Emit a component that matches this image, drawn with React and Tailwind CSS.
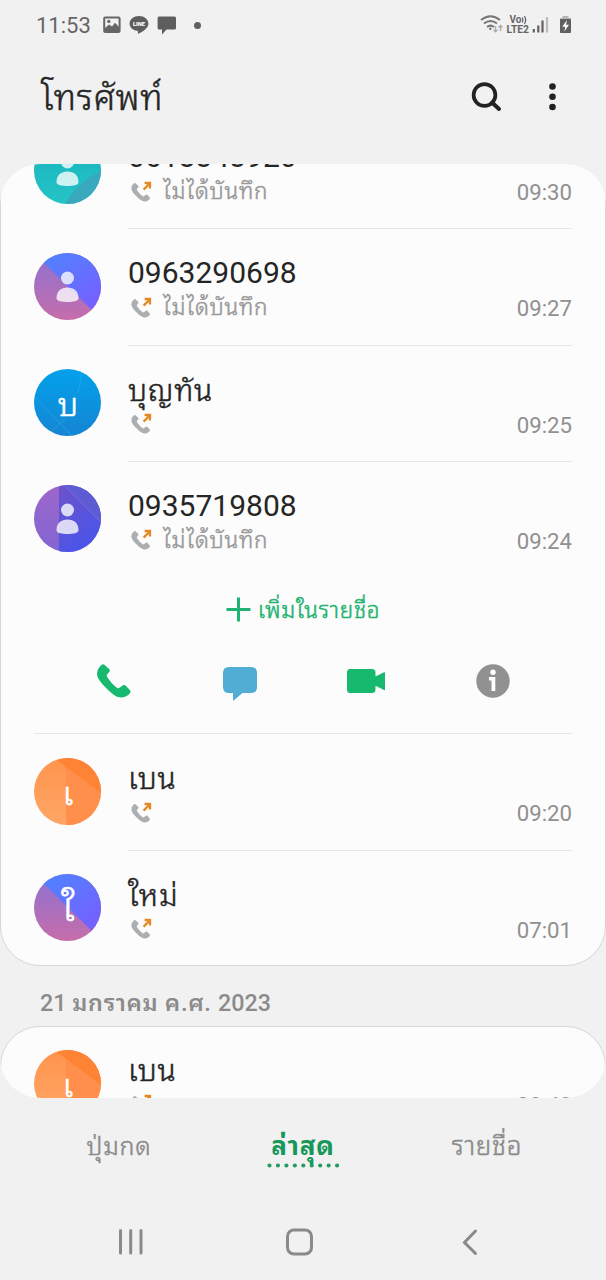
import React from "react";

const PHONE =
  "M14 2Q18 -1 22 2L36 15Q40 19 37 23L29 32Q28 36 33 43Q46 62 60 71Q64 74 68 70L77 63Q81 61 85 64L98 78Q102 84 96 89Q84 101 68 99Q52 97 30 74Q2 48 0 32Q0 12 14 2Z";

const PERSON = (
  <g fill="#fff" fillOpacity="0.78">
    <circle cx="33.5" cy="25" r="6.5" />
    <path d="M22.500 45.500C22.500 38 27 34.500 33.500 34.500S44.500 38 44.500 45.500C44.500 50.200 22.500 50.200 22.500 45.500Z" />
  </g>
);

const GRADIENTS = {
  teal: ["#1ab5c0", "#25c3c6", "#2f9fb9", "#3aa9be"],
  violet: ["#9272cf", "#c66daa", "#5083ff", "#7560ff"],
  blue: ["#049ee9", "#1585d2", "#049ee9", "#1585d2"],
  purple: ["#9a66cc", "#8365d2", "#7052c4", "#4c55e8"],
  orange: ["#ff9650", "#ffa665", "#ff8433", "#ff8740"],
};

function Avatar({ kind, id, letter }) {
  const clip = `clip-${id}`;
  const g1 = `g1-${id}`;
  const g2 = `g2-${id}`;
  const stops = GRADIENTS[kind];
  return (
    <svg className="block h-[67px] w-[67px] shrink-0" viewBox="0 0 67 67">
      <defs>
        <clipPath id={clip}>
          <circle cx="33.5" cy="33.5" r="33.5" />
        </clipPath>
        <linearGradient id={g1} x1="0" y1="0" x2="0" y2="67" gradientUnits="userSpaceOnUse">
          <stop offset="0.1" stopColor={stops[0]} />
          <stop offset="1" stopColor={stops[1]} />
        </linearGradient>
        <linearGradient id={g2} x1="15" y1="0" x2="55" y2="55" gradientUnits="userSpaceOnUse">
          <stop offset="0" stopColor={stops[2]} />
          <stop offset="1" stopColor={stops[3]} />
        </linearGradient>
      </defs>
      <g clipPath={`url(#${clip})`}>
        <rect width="67" height="67" fill={`url(#${g1})`} />
        {kind === "teal" && <path d="M67 34Q42 46 31 67H67Z" fill={`url(#${g2})`} />}
        {kind === "violet" && <path d="M0 0L67 66V0Z" fill={`url(#${g2})`} />}
        {kind === "blue" && (
          <g fill="none" stroke="#3db4ee" strokeOpacity="0.55" strokeWidth="0.8">
            <path d="M48 3L44 24" />
            <path d="M2 29L38 67" />
            <path d="M18 61L32 49" />
          </g>
        )}
        {kind === "purple" && (
          <>
            <rect x="25" width="42" height="67" fill={`url(#${g2})`} />
            <path d="M30 0L67 37V0Z" fill="#5e5cd2" />
            <path d="M30 0L67 37" stroke="#8280df" strokeWidth="0.6" />
          </>
        )}
        {kind === "orange" && (
          <>
            <rect x="32" width="35" height="67" fill="#ff8f4b" />
            <path d="M20 0L67 35V0Z" fill="#ff8335" />
          </>
        )}
        {letter ? (
          <text
            x="34"
            y="47"
            textAnchor="middle"
            fill="#fff"
            stroke="#fff"
            strokeWidth="0.7"
            fontSize={letter === "ใ" ? 38 : 32}
            fontWeight="300"
            fontFamily='"Noto Sans Thai Looped", Loma, sans-serif'
          >
            {letter}
          </text>
        ) : (
          PERSON
        )}
      </g>
    </svg>
  );
}

function OutgoingCall() {
  return (
    <svg className="block h-[22px] w-[22px] shrink-0" viewBox="0 0 22 22">
      <g transform="translate(0.400 1.900) scale(0.187)">
        <path d={PHONE} fill="#acaeb0" />
      </g>
      <path d="M12.600 8.600L18 3.200M13.600 2H19V7.500" fill="none" stroke="#e58a22" strokeWidth="2.300" />
    </svg>
  );
}

function Thai({ children }) {
  return (
    <span className="relative -top-[2px] font-['Noto_Sans_Thai_Looped',Loma,sans-serif] font-light tracking-[0.75px] [-webkit-text-stroke:0.5px]">
      {children}
    </span>
  );
}

function Row({ id, kind, letter, number, name, note, time, divider }) {
  return (
    <div className="flex h-[116.33px] shrink-0 pl-[34px] pr-[34px]">
      <div className="pt-[23.5px]">
        <Avatar id={id} kind={kind} letter={letter} />
      </div>
      <div className={divider ? "ml-[27px] flex-1 border-b border-[#e6e6e6] pt-[26px]" : "ml-[27px] flex-1 pt-[26px]"}>
        <div className="h-[36px] whitespace-nowrap text-[30px] leading-[35px] text-[#252525]">
          {number || <Thai>{name}</Thai>}
        </div>
        <div className="flex h-[33px] items-center pl-[3px]">
          <OutgoingCall />
          <span className="ml-[10px] flex-1 whitespace-nowrap pt-[2px] text-[22.500px] leading-[33px] text-[#999]">
            {note && <Thai>{note}</Thai>}
          </span>
          <span className="whitespace-nowrap pt-[2px] text-[22.200px] leading-[33px] text-[#909090]">{time}</span>
        </div>
      </div>
    </div>
  );
}

function StatusBar() {
  return (
    <div className="flex h-[50px] items-center pl-[36px] pr-[33px] text-[#666]">
      <span className="pt-[2px] text-[22px] leading-[48px]">11:53</span>
      <svg className="ml-[12px] h-[18px] w-[18px]" viewBox="0 0 18 18">
        <rect x="1.200" y="1.500" width="15.400" height="14.500" rx="1" fill="none" stroke="#666" strokeWidth="2" />
        <path d="M2 12L6 8.500L9 10.500L12 6.800L16 11V16H2Z" fill="#666" />
        <circle cx="5.800" cy="5.400" r="1.700" fill="#666" />
      </svg>
      <svg className="ml-[8px] h-[20px] w-[20px]" viewBox="0 0 20 20">
        <path d="M10 1C4.800 1 0.600 4.300 0.600 8.700C0.600 12.500 3.800 15 8 15.800C9.300 16.100 9 17.200 8.900 19C12 17.500 19.400 13.500 19.400 8.700C19.400 4.300 15.200 1 10 1Z" fill="#5e5e5e" />
        <text x="10" y="10.800" textAnchor="middle" fontSize="5.800" fontWeight="900" fill="#fff" fontFamily="Roboto, sans-serif">LINE</text>
      </svg>
      <svg className="ml-[8px] h-[19px] w-[20px]" viewBox="0 0 20 19">
        <path d="M2 0.500H17.500Q19 0.500 19 2V12Q19 13.500 17.500 13.500H9.500L5 18.500V13.500H2Q0.600 13.500 0.600 12V2Q0.600 0.500 2 0.500Z" fill="#5e5e5e" />
      </svg>
      <span className="ml-[17px] h-[7px] w-[7px] rounded-full bg-[#606060]" />
      <div className="flex-1" />
      <svg className="h-[24px] w-[93px]" viewBox="480 13 93 24">
        <g fill="none" stroke="#777" strokeWidth="2" strokeLinecap="butt">
          <path d="M481 20Q490.500 12.500 500 20" />
          <path d="M484 23.500Q490.500 18.500 497 23.500" />
          <path d="M487 27Q490.500 24.200 494 27" />
        </g>
        <circle cx="490.300" cy="28.800" r="1.300" fill="#777" />
        <g fill="none" stroke="#adadad" strokeWidth="1.400">
          <path d="M495.500 26V31.800M493.500 29.700L495.500 31.700L497.500 29.700M500.500 31V25.500M498.500 27.600L500.500 25.600L502.500 27.600" />
        </g>
        <g fill="#666" fontFamily="Roboto, sans-serif" fontWeight="700">
          <text x="509.500" y="23.400" fontSize="10">Vo</text>
          <text x="506.500" y="33" fontSize="10.500" textLength="22.500" lengthAdjust="spacingAndGlyphs">LTE2</text>
        </g>
        <path d="M522.300 17.500Q523.600 20 522.300 22.500M524.400 16Q526.900 20 524.400 24" fill="none" stroke="#666" strokeWidth="1.300" />
        <path d="M533.800 29V32.500M538.300 25.500V32.500M542.500 20.500V32.500" stroke="#606060" strokeWidth="2.200" />
        <path d="M547 17V32.500" stroke="#bbb" strokeWidth="2.200" />
        <path d="M562.500 16H568.500V18H571V20H560V18H562.500Z" fill="#b5b5b5" />
        <rect x="560" y="19" width="11" height="14" rx="0.800" fill="#606060" />
        <path d="M567 20L562.300 26.700H565.200L564.300 31.500L569 24.800H566Z" fill="#fff" />
      </svg>
    </div>
  );
}

export default function App() {
  return (
    <div className="flex h-[1280px] w-[606px] flex-col overflow-hidden bg-[#f1f1f1] font-[Roboto,'Noto_Sans_Thai_Looped',Loma,sans-serif]">
      <StatusBar />
      <header className="flex h-[114px] items-start pl-[41px] pr-[47px] pt-[22px]">
        <h1 className="-mt-px flex-1 text-[35px] leading-[50px] text-[#252525]">
          <Thai>โทรศัพท์</Thai>
        </h1>
        <svg className="mt-[8px] h-[34px] w-[34px]" viewBox="0 0 34 34">
          <circle cx="15.500" cy="15" r="10.900" fill="none" stroke="#222" strokeWidth="3.700" />
          <path d="M23 22.500L30 29" stroke="#222" strokeWidth="4" strokeLinecap="round" />
        </svg>
        <svg className="ml-[42px] mt-[8px] h-[34px] w-[14px]" viewBox="0 0 14 34">
          <g fill="#222">
            <circle cx="7.500" cy="6.500" r="3.300" />
            <circle cx="7.500" cy="16.800" r="3.300" />
            <circle cx="7.500" cy="27" r="3.300" />
          </g>
        </svg>
      </header>

      <main className="flex h-[934px] shrink-0 flex-col overflow-hidden rounded-[40px]">
        <section className="-mt-[52px] flex h-[854px] shrink-0 flex-col rounded-[40px] border border-[#d6d6d6] bg-[#fcfcfc]">
          <div className="-mx-px flex flex-col">
            <Row id="a" kind="teal" number="0618343920" note="ไม่ได้บันทึก" time="09:30" divider />
            <Row id="b" kind="violet" number="0963290698" note="ไม่ได้บันทึก" time="09:27" divider />
            <Row id="c" kind="blue" letter="บ" name="บุญทัน" time="09:25" divider />
            <Row id="d" kind="purple" number="0935719808" note="ไม่ได้บันทึก" time="09:24" />
            <div className="mx-[34px] flex h-[156px] flex-col border-b border-[#e6e6e6]">
              <div className="flex h-[62px] items-center justify-center gap-[7px] text-[#1fb270]">
                <svg className="h-[25px] w-[25px]" viewBox="0 0 25 25">
                  <path d="M12.500 0.500V24.500M0.500 12.500H24.500" stroke="#1fb270" strokeWidth="3" />
                </svg>
                <span className="pt-[3px] text-[22.500px] leading-[34px]">
                  <Thai>เพิ่มในรายชื่อ</Thai>
                </span>
              </div>
              <div className="flex h-[82px] items-center pl-[63px]">
                <svg className="h-[34px] w-[34px]" viewBox="0 0 101 101">
                  <path d={PHONE} fill="#17b96f" />
                </svg>
                <svg className="ml-[91px] h-[40px] w-[36px]" viewBox="0 0 36 40">
                  <path d="M7 6H29Q35 6 35 12V26Q35 32 29 32H20.500L11 40V32H7Q1 32 1 26V12Q1 6 7 6Z" fill="#52add5" />
                </svg>
                <svg className="ml-[88px] h-[26px] w-[40px]" viewBox="0 0 40 26">
                  <path d="M4 1H26Q29.500 1 29.500 4.500V8.500L38 4.300Q39 4 39 5V21.500Q39 22.500 38 22L29.500 17.800V21.500Q29.500 25 26 25H4Q1 25 1 21.500V4.500Q1 1 4 1Z" fill="#17b96f" />
                </svg>
                <svg className="ml-[89.500px] h-[34px] w-[34px]" viewBox="0 0 34 34">
                  <circle cx="17" cy="17" r="16.700" fill="#919191" />
                  <circle cx="17" cy="8.200" r="2.700" fill="#fff" />
                  <path d="M13 13H19.300V27H15.500V16.500H13Z" fill="#fff" />
                </svg>
              </div>
            </div>
            <Row id="e" kind="orange" letter="เ" name="เบน" time="09:20" divider />
            <Row id="f" kind="violet" letter="ใ" name="ใหม่" time="07:01" />
          </div>
        </section>
        <div className="flex h-[60px] shrink-0 items-center whitespace-pre pl-[40px] pt-[14px] text-[23.300px] font-medium leading-[34px] text-[#8b8b8b]">
          <span>21 </span>
          <span className="font-semibold tracking-[0.7px]">มกราคม ค.ศ. </span>
          <span>2023</span>
        </div>
        <section className="flex h-[150px] shrink-0 flex-col rounded-t-[40px] border border-[#d6d6d6] bg-[#fcfcfc]">
          <div className="-mx-px -mt-px">
            <Row id="g" kind="orange" letter="เ" name="เบน" time="08:48" />
          </div>
        </section>
      </main>

      <nav className="grid h-[106px] shrink-0 grid-cols-3 px-[27px] pt-[31px] text-center text-[25px] leading-[34px] text-[#8b8b8b]">
        <Thai>ปุ่มกด</Thai>
        <div className="flex flex-col items-center">
          <span className="-mt-[3px] h-[37px] font-['Noto_Sans_Thai_Looped',Loma,sans-serif] text-[26px] font-bold tracking-[0.8px] text-[#16985a]">ล่าสุด</span>
          <svg className="h-[5px] w-[73px]" viewBox="0 0 73 5">
            <path d="M2.500 2.500H71" stroke="#239b61" strokeWidth="4.200" strokeLinecap="round" strokeDasharray="0 8.450" />
          </svg>
        </div>
        <span className="-mt-px text-[26px]">
          <Thai>รายชื่อ</Thai>
        </span>
      </nav>

      <footer className="flex h-[76px] shrink-0 items-center pl-[117px]">
        <svg className="h-[30px] w-[28px]" viewBox="0 0 28 30">
          <path d="M3.500 3.500V26M13.700 3.500V26M24 3.500V26" stroke="#8a8a8a" strokeWidth="3" strokeLinecap="round" />
        </svg>
        <svg className="ml-[139px] h-[30px] w-[30px]" viewBox="0 0 30 30">
          <rect x="3.500" y="3" width="24" height="24" rx="6.500" fill="none" stroke="#8a8a8a" strokeWidth="3" />
        </svg>
        <svg className="ml-[146px] h-[30px] w-[20px]" viewBox="0 0 20 30">
          <path d="M15.500 4L4.500 15.500L15.500 26.500" fill="none" stroke="#8a8a8a" strokeWidth="3" strokeLinecap="round" />
        </svg>
      </footer>
    </div>
  );
}
